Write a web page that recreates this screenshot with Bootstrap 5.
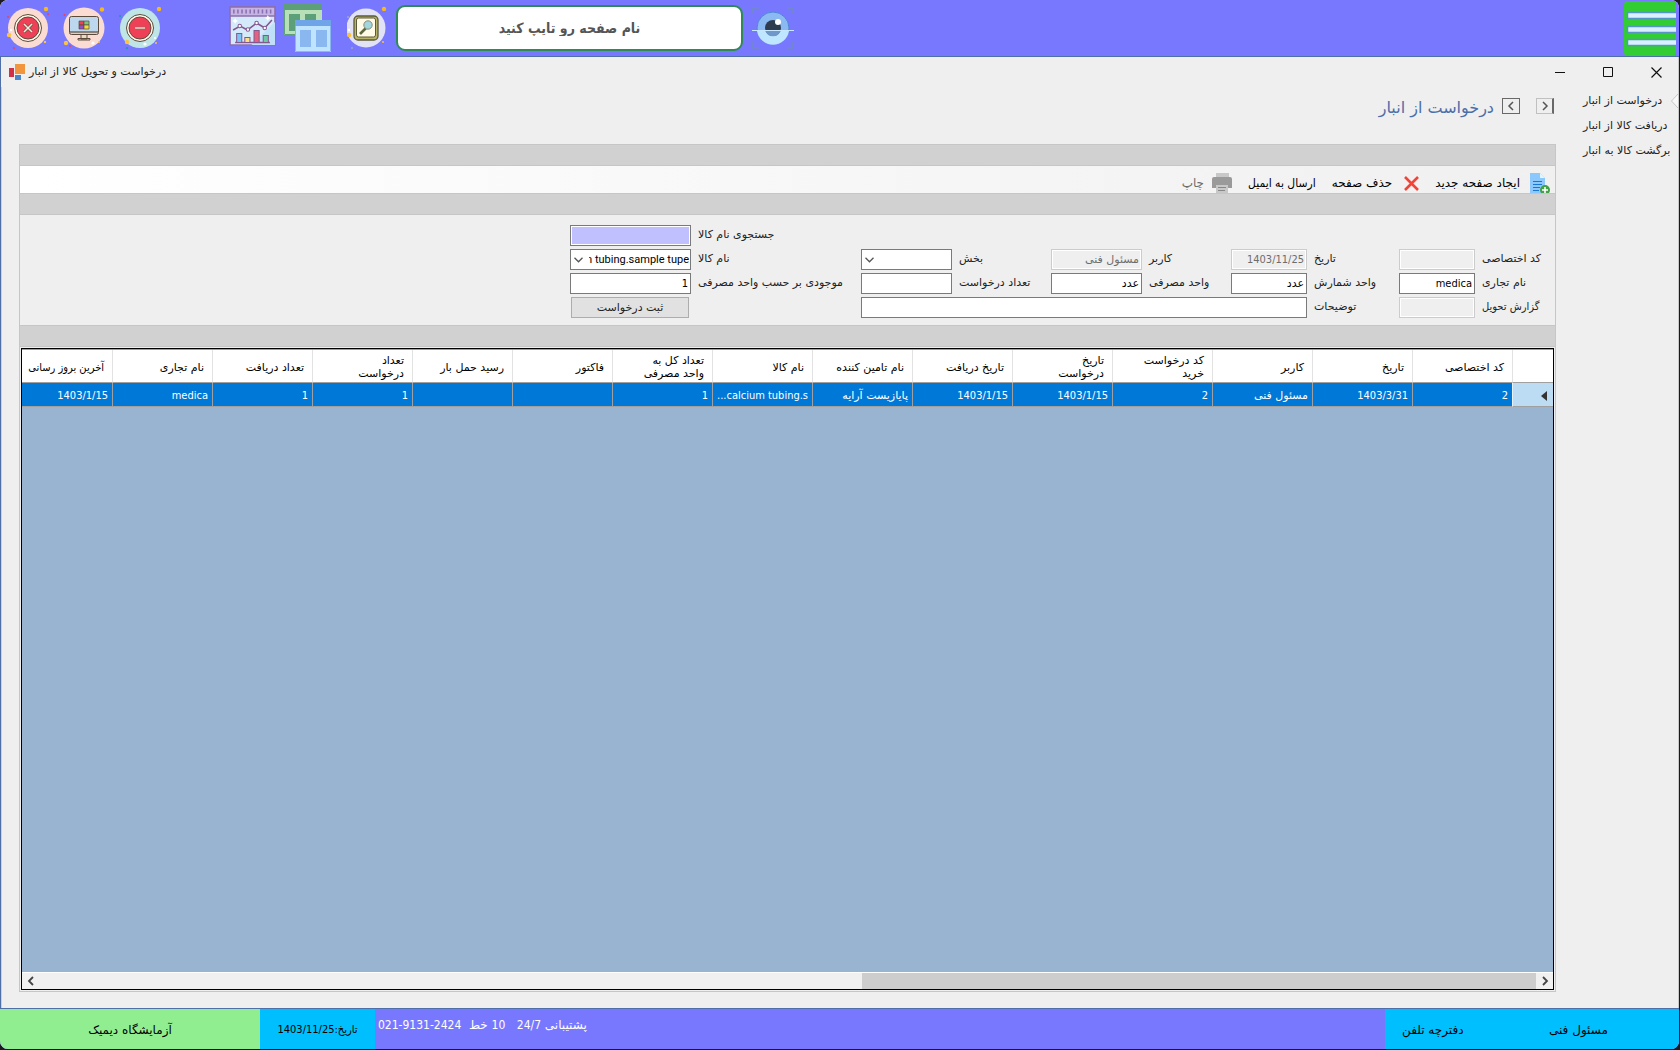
<!DOCTYPE html>
<html lang="fa" dir="rtl">
<head>
<meta charset="utf-8">
<meta name="viewport" content="width=device-width, initial-scale=1">
<title>درخواست و تحویل کالا از انبار</title>
<link href="https://cdn.jsdelivr.net/npm/bootstrap@5.3.0/dist/css/bootstrap.min.css" rel="stylesheet">
<style>
  body { background:#1b1b1f; font-family:"DejaVu Sans",sans-serif; font-size:11px; line-height:14px; color:#222; }
  .narrow { font-family:"DejaVu Sans Condensed","DejaVu Sans",sans-serif; }
  .wide-text { font-family:"DejaVu Sans",sans-serif; }
  .shell { min-height:100vh; padding:0 1px 1px 0; }
  .desk { border-radius:8px; overflow:hidden; background:#efefef; }
  button { color:inherit; }
  .plain { background:none; border:0; padding:0; }
  .topbar { background:#7878ff; height:57px; border-bottom:1px solid #4f6fa8; }
  .round-btn { width:56px; height:56px; }
  .tools { margin-left:61px; }
  .page-search { width:347px; height:46px; border:2px solid #2e8b57; border-radius:9px; text-align:center; font-size:14px; font-weight:bold; color:#555; background:#fff; margin-left:9px; margin-right:9px; padding:0 8px 1px; }
  .page-search::placeholder { color:#555; opacity:1; }
  .menu-btn { width:52px; height:55px; background:#32cd32; border-radius:4px; margin-right:3px; }
  .win { border-left:1px solid #4f6fa8; border-right:1px solid #c9c9c9; }
  .titlebar { height:30px; padding-left:8px; }
  .win-btn { width:44px; height:30px; }
  .side { width:122px; padding-top:7px; }
  .side a { display:block; color:#222; text-decoration:none; text-align:left; padding-left:27px; height:25px; line-height:14px; }
  .work { border-left:1px solid #d0d0d0; padding:11px 0 16px 17px; min-width:0; }
  .pagehead { height:46px; padding-right:2px; }
  .pagehead h1 { font-size:16px; line-height:20px; color:#4a6ea9; font-weight:normal; margin:0 8px 0 0; }
  .nav-box { width:18px; height:16px; border:1px solid #686868; }
  .nav-box.first { border-color:#c0c0c0; border-right:2px solid #686868; margin-left:16px; }
  .panel { border:1px solid #c6c6c6; min-height:0; }
  .band { background:#d1d1d1; height:21px; border-bottom:1px solid #c6c6c6; flex:none; }
  .band.tall { height:22px; border-top:1px solid #c6c6c6; }
  .toolbar { height:28px; overflow:hidden; background:linear-gradient(to right,#fff,#f0f0f0); border-bottom:1px solid #c6c6c6; font-size:12px; color:#000; padding-right:5px; flex:none; }
  .toolbar button { height:34px; display:flex; align-items:center; white-space:nowrap; }
  .entry { display:grid; grid-template-columns:80px 76px 92px 76px 89px 91px 99px 91px 170px 121px; grid-auto-rows:21px; row-gap:3px; padding:10px 0 7px; flex:none; }
  .entry label { text-align:left; padding-left:7px; line-height:20px; white-space:nowrap; }
  .entry input, .entry select { width:100%; min-width:0; height:21px; border:1px solid #7a7a7a; border-radius:0; background:#fff; padding:0 2px; font-size:11px; line-height:19px; color:#000; outline:0; text-align:right; }
  .entry input:disabled { background:#efefef; border-color:#cccccc; color:#6d6d6d; box-shadow:inset 0 0 0 1px #fff; }
  .entry .seek { background:#c0c0ff; box-shadow:inset 0 0 0 1px #fff; }
  .entry select { appearance:none; font-family:Roboto,"DejaVu Sans",sans-serif; padding-left:18px; padding-right:1px; background:#fff url("data:image/svg+xml,%3Csvg xmlns='http://www.w3.org/2000/svg' width='9' height='6'%3E%3Cpath d='M.5.8 4.5 4.8 8.5.8' fill='none' stroke='%23555' stroke-width='1.3'/%3E%3C/svg%3E") no-repeat 3px 7px; }
  .entry button { background:#e1e1e1; border:1px solid #adadad; margin:0 2px 0 1px; padding:0; line-height:18px; }
  .r1 { grid-row:1; } .r2 { grid-row:2; } .r3 { grid-row:3; } .r4 { grid-row:4; }
  .c1 { grid-column:1; } .c2 { grid-column:2; } .c3 { grid-column:3; } .c4 { grid-column:4; } .c5 { grid-column:5; }
  .c6 { grid-column:6; } .c7 { grid-column:7; } .c8 { grid-column:8; } .c9 { grid-column:9; } .c10 { grid-column:10; }
  .c-wide { grid-column:4 / 9; }
  .datagrid { border:1px solid #000; background:#99b4d1; margin:1px; overflow:hidden; box-shadow:inset 0 1px 0 #a0a0a0; padding-top:1px; }
  .rows { overflow:hidden; }
  .datagrid table { table-layout:fixed; width:1541px; border-collapse:separate; border-spacing:0; color:#000; }
  .datagrid th { font-weight:normal; background:#fff; height:33px; padding:2px 8px 0; line-height:13px; vertical-align:middle; white-space:nowrap; border-left:1px solid #e2e2e2; border-bottom:1px solid #a0a0a0; }
  .datagrid td { background:#0078d7; color:#fff; height:24px; padding:2px 4px 0; border-left:1px solid #a0a0a0; border-bottom:1px solid #a0a0a0; white-space:nowrap; overflow:hidden; }
  .datagrid td.pointer { background:#bcdcf4; border-left-color:#e8f2fa; padding-right:6px; }
  .hscroll { height:17px; background:#f0f0f0; border-top:1px solid #fff; }
  .hscroll button { width:17px; height:16px; display:flex; align-items:center; justify-content:center; }
  .thumb { width:44%; background:#cdcdcd; }
  .foot { height:41px; border-top:1px solid #4f6fa8; background:#7878ff; color:#000; font-size:12px; }
  .lab { width:260px; background:#90ee90; padding-top:2px; }
  .today { width:115px; background:#00bfff; font-size:11px; padding-top:2px; }
  .support { color:#fff; padding:9px 3px 0; white-space:pre; }
  .acct { width:294px; background:#00bfff; padding:2px 0 0 17px; }
  .acct a { color:#000; text-decoration:none; flex:0 0 147px; }
  svg { display:block; flex:none; }
</style>
</head>
<body>
<div class="shell d-flex flex-column">
<div class="desk d-flex flex-column flex-grow-1">

  <header class="topbar d-flex" dir="ltr">
    <button class="plain round-btn d-flex align-items-center justify-content-center" aria-label="بستن">
      <svg width="44" height="44" viewBox="0 0 44 44"><circle cx="22" cy="22" r="20" fill="#fadcd3"/><circle cx="22" cy="22" r="13.5" fill="#fff8e8" stroke="#5b4a3c"/><circle cx="22" cy="22" r="11" fill="#ee4056" stroke="#5b4a3c"/><path d="m18 18 8 8m0-8-8 8" stroke="#5b4a3c" stroke-width="2.6"/><path d="m18 18 8 8m0-8-8 8" stroke="#f4ecd8" stroke-width="1.6"/><circle cx="40" cy="3" r="2.2" fill="#f6b81c"/><circle cx="3" cy="29" r="2.2" fill="#fdc33e"/><circle cx="42" cy="8" r="1" fill="#ee4056"/><circle cx="2" cy="11" r="1" fill="#ee4056"/><circle cx="8" cy="42" r="1" fill="#ee4056"/><circle cx="39" cy="36" r="1.2" fill="#fdc33e"/><circle cx="5" cy="24" r="1.2" fill="#fff"/></svg>
    </button>
    <button class="plain round-btn d-flex align-items-center justify-content-center" aria-label="میزکار">
      <svg width="44" height="44" viewBox="0 0 44 44"><circle cx="22" cy="22" r="20.5" fill="#fadcd3"/><path d="M19 28h6v5h-6zM16 32.500h12v1.500H16z" fill="#e8dcc0" stroke="#5b4a3c"/><rect x="7.500" y="10.500" width="29" height="18" rx="2" fill="#bcd7ee" stroke="#5b4a3c"/><path d="M8 26h28" stroke="#8b8179" stroke-width="2"/><path d="M17 15h5v4h-5z" fill="#ee4056" stroke="#5b4a3c" stroke-width=".7"/><path d="M22 15h5v4h-5z" fill="#7bc67a" stroke="#5b4a3c" stroke-width=".7"/><path d="M17 19h5v4h-5z" fill="#9250c0" stroke="#5b4a3c" stroke-width=".7"/><path d="M22 19h5v4h-5z" fill="#f4dc3c" stroke="#5b4a3c" stroke-width=".7"/><circle cx="40" cy="3.500" r="2.200" fill="#f6b81c"/><circle cx="4" cy="37" r="2.200" fill="#fdc33e"/><circle cx="31" cy="37" r="1.600" fill="#fff"/><circle cx="2.500" cy="9" r="1" fill="#ee4056"/><circle cx="8" cy="40" r="1" fill="#ee4056"/><circle cx="37" cy="36" r="1" fill="#fdc33e"/></svg>
    </button>
    <button class="plain round-btn d-flex align-items-center justify-content-center" aria-label="کوچک کردن">
      <svg width="44" height="44" viewBox="0 0 44 44"><circle cx="22" cy="22" r="20" fill="#bfe5e6"/><circle cx="22" cy="22" r="13.5" fill="#fff8e8" stroke="#5b4a3c"/><circle cx="22" cy="22" r="11" fill="#ee4056" stroke="#5b4a3c"/><path d="M17 22h10" stroke="#8a6c60" stroke-width="2.6"/><path d="M17 22h10" stroke="#e8d4c4" stroke-width="1.4"/><circle cx="41" cy="3" r="2.2" fill="#f6b81c"/><circle cx="9" cy="36" r="2.2" fill="#fdc33e"/><circle cx="27" cy="38" r="1.600" fill="#fff"/><circle cx="37" cy="32" r="1" fill="#fff"/><circle cx="2" cy="10" r="1" fill="#149aa8"/><circle cx="9" cy="42" r="1" fill="#149aa8"/><circle cx="38" cy="37" r="1" fill="#fdc33e"/></svg>
    </button>
    <div class="tools d-flex align-items-start">
      <button class="plain mt-1" aria-label="نمودار">
        <svg width="47" height="44" viewBox="0 0 46 44" preserveAspectRatio="none"><path d="M1 3h44v38H1z" fill="#d4e9fa" stroke="#8c6fae" stroke-width="1.600"/><path d="M22 41 45 18v23z" fill="#bfe0f7"/><path d="M1 3h44v9H1z" fill="#c5b4e4" stroke="#8c6fae" stroke-width="1.500"/><path d="M4 7.500h38" stroke="#8c6fae" stroke-width="4" stroke-dasharray="1.500 2.500"/><path d="M6 38.500h34" stroke="#84588e" stroke-width="1.500"/><g stroke="#84588e"><path d="M7.500 29.500h5v9h-5z" fill="#7cc4f4"/><path d="M15.500 33.500h5v5h-5z" fill="#fbe08a"/><path d="M24.500 26.500h5v12h-5z" fill="#e7607f"/><path d="M33.500 31.500h5v7h-5z" fill="#6fc7a4"/></g><path d="m4 26 7-4 7 4 9-7 8 5 7-8" fill="none" stroke="#84588e" stroke-width="1.500"/><g fill="#fff" stroke="#84588e"><circle cx="10.500" cy="22" r="1.700"/><circle cx="18.500" cy="25.500" r="1.700"/><circle cx="27" cy="19" r="1.700"/><circle cx="35" cy="24" r="1.700"/></g><path d="m6 14 1 2 2 1-2 1-1 2-1-2-2-1 2-1zM38 11l1 2 2 1-2 1-1 2-1-2-2-1 2-1z" fill="#fff"/></svg>
      </button>
      <button class="plain mt-1 ms-2" aria-label="پنجره ها">
        <svg width="47" height="48" viewBox="0 0 47 48"><path d="M0 0h38v31H0z" fill="#b8e0b8"/><path d="M0 0h38v6H0z" fill="#5d9f78"/><path d="M5 10h11v17H5zM21 10h11v17H21z" fill="#5d9f78"/><path d="M.5 6v24.500H12" fill="none" stroke="#5d9f78"/><path d="M11 16h36v32H11z" fill="#bfe4ff"/><path d="M11 16h36v6H11z" fill="#6fa4e8"/><path d="M16 26h11v17H16zM32 26h11v17H32z" fill="#8bb7f0"/><path d="M11.500 22v25.500h35V22" fill="none" stroke="#8bb7f0"/></svg>
      </button>
      <button class="plain mt-1 ms-3" aria-label="جستجو">
        <svg width="40" height="46" viewBox="2 0 40 46"><circle cx="21" cy="24" r="19.500" fill="#e2e2f6"/><rect x="9" y="12" width="24" height="24" rx="4" fill="#b6b46a" stroke="#5c5a34" stroke-width="1.300"/><rect x="11.500" y="14" width="19" height="19" rx="2" fill="#fffbe6" stroke="#5c5a34"/><path d="m15 30 6-6" stroke="#5c6a44" stroke-width="2.600"/><circle cx="23" cy="21" r="4.200" fill="#9fd7dc" stroke="#8b8b80"/><circle cx="39" cy="5" r="2.200" fill="#f6b81c"/><circle cx="4.200" cy="31" r="2.200" fill="#fdc33e"/><circle cx="4" cy="26" r="1.200" fill="#fff"/><circle cx="38" cy="38" r="1" fill="#fdc33e"/><circle cx="7" cy="44" r="1" fill="#a5a5c0"/><circle cx="3" cy="13" r="1" fill="#a5a5c0"/></svg>
      </button>
    </div>
    <input class="page-search narrow align-self-center" dir="rtl" type="text" placeholder="نام صفحه رو تایپ کنید" aria-label="نام صفحه">
    <button class="plain d-flex align-items-center" aria-label="نمایش">
      <svg width="42" height="42" viewBox="0 0 42 42"><path d="M1 7V1h6M35 1h6v6M41 35v6h-6M7 41H1v-6" fill="none" stroke="#7089c6" stroke-width="1.600"/><circle cx="21" cy="21" r="16" fill="#8bbaf3" stroke="#5385d4"/><path d="M5 24a16.200 16.200 0 0 0 32 0z" fill="#bfe6ff"/><circle cx="21" cy="21" r="8" fill="#2e3c50"/><path d="M13.500 24a8 8 0 0 0 15 0z" fill="#6f97c8"/><circle cx="26" cy="15" r="3" fill="#fff"/><path d="M0 23.500h42" stroke="#c8e8ff"/></svg>
    </button>
    <button class="plain menu-btn ms-auto mt-auto" aria-label="منو">
      <svg width="52" height="55" viewBox="0 0 52 55"><g fill="#daf0ff" stroke="#5596c4"><path d="M52 11.500H3.500v6H52M52 25.500H3.500v6H52M52 38.500H3.500v6H52" stroke-width="1.500"/></g></svg>
    </button>
  </header>

  <div class="win d-flex flex-column flex-grow-1">
    <div class="titlebar d-flex align-items-center" dir="ltr">
      <svg width="16" height="16" viewBox="0 0 16 16"><path d="M6 0h10v10H6z" fill="#f2953f"/><path d="M0 4h5v9H0z" fill="#d13148"/><path d="M6 11h6v5H6z" fill="#4a86cc"/></svg>
      <span class="ms-1" dir="rtl">درخواست و تحویل کالا از انبار</span>
      <div class="ms-auto d-flex gap-1">
        <button class="plain win-btn d-flex align-items-center justify-content-center" aria-label="کمینه"><svg width="11" height="11"><path d="M0 5.500h10" stroke="#111"/></svg></button>
        <button class="plain win-btn d-flex align-items-center justify-content-center" aria-label="بیشینه"><svg width="11" height="11"><path d="M.5.5h9v9h-9z" fill="none" stroke="#111"/></svg></button>
        <button class="plain win-btn d-flex align-items-center justify-content-center" aria-label="بستن پنجره"><svg width="11" height="11"><path d="m.5.5 10 10m0-10-10 10" stroke="#111" stroke-width="1.200"/></svg></button>
      </div>
    </div>

    <div class="d-flex flex-grow-1">
      <nav class="side d-flex flex-shrink-0">
        <svg width="7" height="14"><path d="M7 0 .5 7 7 14" fill="#f8f8f8" stroke="#c6c6c6"/></svg>
        <div class="flex-grow-1 text-nowrap">
          <a href="#">درخواست از انبار</a>
          <a href="#">دریافت کالا از انبار</a>
          <a href="#">برگشت کالا به انبار</a>
        </div>
      </nav>

      <main class="work d-flex flex-column flex-grow-1">
        <div class="pagehead d-flex align-items-start">
          <button class="plain nav-box first d-flex align-items-center justify-content-center" aria-label="قبلی"><svg width="8" height="10"><path d="m2 1 4 4-4 4" fill="none" stroke="#555" stroke-width="1.500"/></svg></button>
          <button class="plain nav-box d-flex align-items-center justify-content-center" aria-label="بعدی"><svg width="8" height="10"><path d="M6 1 2 5l4 4" fill="none" stroke="#555" stroke-width="1.500"/></svg></button>
          <h1>درخواست از انبار</h1>
        </div>

        <section class="panel d-flex flex-column flex-grow-1">
          <div class="band"></div>
          <div class="toolbar d-flex align-items-start">
            <button class="plain"><svg width="22" height="20" viewBox="0 0 22 20"><path d="M2 0h10l5 5v15H2z" fill="#8cc8fb"/><path d="M12 0v5h5z" fill="#e1f5fe"/><path d="M5 8.500h9M5 11.500h9M5 14.500h7M5 17.500h6" stroke="#1976d2" stroke-width="1.200"/><circle cx="17" cy="17" r="5" fill="#43a047"/><path d="M17 14v6M14 17h6" stroke="#fff" stroke-width="1.600"/></svg><span class="ms-3 me-2">ایجاد صفحه جدید</span></button>
            <button class="plain"><svg width="15" height="15"><path d="m1 1 13 13M14 1 1 14" stroke="#f44336" stroke-width="2.600"/></svg><span class="me-2 pe-1">حذف صفحه</span></button>
            <button class="plain narrow me-3">ارسال به ایمیل</button>
            <button class="plain me-3" style="color:#6d6d6d" disabled><svg width="20" height="20" viewBox="0 0 20 20"><path d="M4 0h13v5H4z" fill="#c8c8c8"/><path d="M2 4h16q2 0 2 2v9H0V6q0-2 2-2z" fill="#9a9a9a"/><path d="M4 12h12v8H4z" fill="#c8c8c8"/><path d="M6 14.500h8M6 17.500h7" stroke="#888"/></svg><span class="me-2">چاپ</span></button>
          </div>
          <div class="band"></div>

          <form class="entry">
            <label class="r1 c9" for="f-seek">جستجوی نام کالا</label><input class="r1 c10 seek" id="f-seek" type="text">
            <label class="r2 c1" for="f-code">کد اختصاصی</label><input class="r2 c2" id="f-code" type="text" disabled>
            <label class="r2 c3" for="f-date">تاریخ</label><input class="r2 c4 narrow" id="f-date" type="text" value="1403/11/25" disabled>
            <label class="r2 c5" for="f-user">کاربر</label><input class="r2 c6" id="f-user" type="text" value="مسئول فنی" disabled>
            <label class="r2 c7" for="f-dept">بخش</label><select class="r2 c8" id="f-dept"><option></option></select>
            <label class="r2 c9" for="f-item">نام کالا</label><select class="r2 c10" id="f-item"><option>calcium tubing.sample tupe</option></select>
            <label class="r3 c1" for="f-brand">نام تجاری</label><input class="r3 c2 narrow" id="f-brand" type="text" value="medica">
            <label class="r3 c3" for="f-unit">واحد شمارش</label><input class="r3 c4" id="f-unit" type="text" value="عدد">
            <label class="r3 c5" for="f-use">واحد مصرفی</label><input class="r3 c6" id="f-use" type="text" value="عدد">
            <label class="r3 c7" for="f-count">تعداد درخواست</label><input class="r3 c8" id="f-count" type="text">
            <label class="r3 c9" for="f-stock">موجودی بر حسب واحد مصرفی</label><input class="r3 c10 narrow" id="f-stock" type="text" value="1">
            <label class="r4 c1 narrow" for="f-report">گزارش تحویل</label><input class="r4 c2" id="f-report" type="text" disabled>
            <label class="r4 c3" for="f-note">توضیحات</label><input class="r4 c-wide" id="f-note" type="text">
            <button class="r4 c10" type="button">ثبت درخواست</button>
          </form>
          <div class="band tall"></div>

          <div class="datagrid d-flex flex-column flex-grow-1">
            <div class="rows flex-grow-1">
              <table>
                <colgroup><col style="width:41px"><col span="15" style="width:100px"></colgroup>
                <thead><tr><th></th><th>کد اختصاصی</th><th>تاریخ</th><th>کاربر</th><th>کد درخواست<br>خرید</th><th>تاریخ<br>درخواست</th><th>تاریخ دریافت</th><th>نام تامین کننده</th><th>نام کالا</th><th>تعداد کل به<br>واحد مصرفی</th><th>فاکتور</th><th>رسید حمل بار</th><th>تعداد<br>درخواست</th><th>تعداد دریافت</th><th>نام تجاری</th><th class="narrow">آخرین بروز رسانی</th></tr></thead>
                <tbody class="narrow"><tr><td class="pointer"><svg width="6" height="10"><path d="M6 0v10L0 5z" fill="#333"/></svg></td><td>2</td><td>1403/3/31</td><td class="wide-text">مسئول فنی</td><td>2</td><td>1403/1/15</td><td>1403/1/15</td><td class="wide-text">پایازیست آرایه</td><td>calcium tubing.s...</td><td>1</td><td></td><td></td><td>1</td><td>1</td><td>medica</td><td>1403/1/15</td></tr></tbody>
              </table>
            </div>
            <div class="hscroll d-flex" dir="ltr">
              <button class="plain" aria-label="پیمایش چپ"><svg width="8" height="10"><path d="M6 1 2 5l4 4" fill="none" stroke="#444" stroke-width="1.800"/></svg></button>
              <div class="thumb ms-auto"></div>
              <button class="plain" aria-label="پیمایش راست"><svg width="8" height="10"><path d="m2 1 4 4-4 4" fill="none" stroke="#444" stroke-width="1.800"/></svg></button>
            </div>
          </div>
        </section>
      </main>
    </div>
  </div>

  <footer class="foot d-flex" dir="ltr">
    <div class="lab d-flex align-items-center justify-content-center" dir="rtl">آزمایشگاه دیمیک</div>
    <div class="today narrow d-flex align-items-center justify-content-center" dir="rtl">تاریخ:1403/11/25</div>
    <div class="support flex-grow-1"><bdi dir="rtl">پشتیبانی <span class="narrow">24/7</span>   <span class="narrow">10</span> خط  <bdi class="narrow" dir="ltr">021-9131-2424</bdi></bdi></div>
    <div class="acct d-flex align-items-center"><a href="#">دفترچه تلفن</a><a href="#">مسئول فنی</a></div>
  </footer>
</div>
</div>
<script src="https://cdn.jsdelivr.net/npm/bootstrap@5.3.0/dist/js/bootstrap.bundle.min.js"></script>
</body>
</html>
